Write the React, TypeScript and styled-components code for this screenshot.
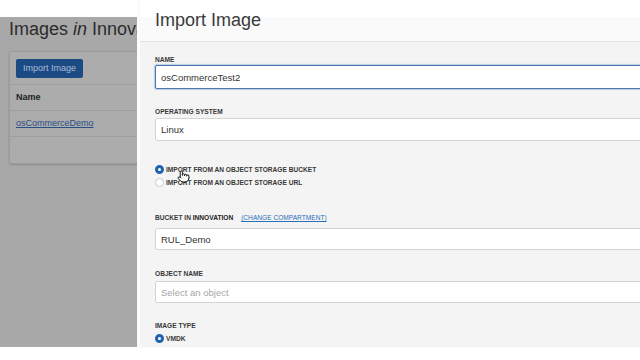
import React from 'react';
import styled, { createGlobalStyle } from 'styled-components';
import { Pointer } from 'lucide-react';

const GlobalStyle = createGlobalStyle`
  html, body {
    margin: 0;
    padding: 0;
    background: #fff;
    overflow: hidden;
    font-family: 'Liberation Sans', Arial, sans-serif;
  }
  * { box-sizing: border-box; }
`

const Frame = styled.div`
  display: flex;
  width: 640px;
  height: 347px;
`

const PageBehind = styled.section`
  flex: none;
  width: 137px;
  margin-top: 17px;
  padding-left: 9px;
  background-color: #a8a8a8;
  overflow: hidden;
`

const PageTitle = styled.h1`
  margin: 1px 0 0;
  font-size: 18px;
  line-height: 22px;
  font-weight: 400;
  color: #2c2c2c;
  white-space: nowrap;

  em { font-style: italic; }
`

const Card = styled.div`
  width: 200px;
  margin-top: 11px;
  background-color: #acacac;
  border: 1px solid #9b9b9b;
  border-radius: 2px;
  box-shadow: 0 1px 2px rgba(0, 0, 0, 0.18);
`

const Toolbar = styled.div`
  padding: 5px 6px 6px;
  border-bottom: 1px solid #9e9e9e;
`

const DimButton = styled.button`
  height: 19px;
  padding: 0 7px;
  border: 0;
  border-radius: 2px;
  background-color: #1c4a84;
  color: #a9bdd7;
  font-family: 'Liberation Sans', Arial, sans-serif;
  font-size: 9px;
`

const TableRow = styled.div<{ $bold?: boolean; $last?: boolean }>`
  display: flex;
  align-items: center;
  height: 26px;
  padding-left: 6px;
  border-bottom: ${p => (p.$last ? '0' : '1px solid #9e9e9e')};
  font-size: 9px;
  font-weight: ${p => (p.$bold ? 700 : 400)};
  color: #222;
`

const DimLink = styled.a`
  color: #2a4f86;
  text-decoration: underline;
`

const Panel = styled.section`
  position: relative;
  flex: 1;
  display: flex;
  flex-direction: column;
  background-color: #f4f4f4;
  border-left: 3px solid #fbfbfb;
  overflow: hidden;
`

const PanelHeader = styled.header`
  flex: none;
  height: 42px;
  padding: 9px 0 0 15px;
  background: linear-gradient(#fff 0 17px, #fafafa 17px);
  border-bottom: 1px solid #e3e3e3;
`

const PanelTitle = styled.h2`
  margin: 0;
  font-size: 18px;
  line-height: 22px;
  font-weight: 400;
  color: #3a3a3a;
`

const Form = styled.div`
  display: flex;
  flex-direction: column;
  width: 560px;
  padding-left: 15px;
`

const Field = styled.div<{ $top: number }>`
  display: flex;
  flex-direction: column;
  margin-top: ${p => p.$top}px;
`

const Label = styled.label<{ $gap?: number }>`
  display: block;
  height: 10px;
  line-height: 10px;
  margin-bottom: ${p => p.$gap ?? 0}px;
  font-size: 6.6px;
  font-weight: 700;
  text-transform: uppercase;
  color: #383838;
  white-space: nowrap;

  strong { font-weight: 700; color: #222; }
`

const LabelLink = styled.a`
  margin-left: 8px;
  font-weight: 400;
  color: #2a6db8;
  text-decoration: underline;
`

const TextInput = styled.input<{ $focused?: boolean; $height?: number }>`
  width: 100%;
  height: ${p => p.$height ?? 23}px;
  padding: 0 5px;
  background-color: #fff;
  border: 1px solid ${p => (p.$focused ? '#4d78b0' : '#d4d4d4')};
  box-shadow: ${p => (p.$focused ? '0 0 1px 1px rgba(110, 155, 210, 0.45)' : 'none')};
  border-radius: 2px;
  outline: none;
  font-family: 'Liberation Sans', Arial, sans-serif;
  font-size: 9.5px;
  color: #333;

  &::placeholder { color: #a6a6a6; }
`

const RadioGroup = styled.div<{ $top: number }>`
  display: flex;
  flex-direction: column;
  margin-top: ${p => p.$top}px;
`

const RadioRow = styled.div<{ $top?: number }>`
  display: flex;
  align-items: center;
  gap: 2px;
  height: 13px;
  margin-top: ${p => p.$top ?? 0}px;
  font-size: 6.6px;
  font-weight: 700;
  text-transform: uppercase;
  color: #383838;
  white-space: nowrap;
`

const RadioDot = styled.span<{ $checked?: boolean }>`
  flex: none;
  width: 9px;
  height: 9px;
  border-radius: 50%;
  background-color: #fff;
  border: ${p => (p.$checked ? '3px solid #1f64b0' : '1px solid #c9c9c9')};
`

const Hint = styled.p`
  margin: 0 0 0 11px;
  font-size: 6px;
  line-height: 8px;
  color: #a0a0a0;
  white-space: nowrap;
`

const Cursor = styled.span`
  position: absolute;
  left: 37px;
  top: 170px;
  display: flex;
`

const App: React.FC = () => {
  return (
    <>
      <GlobalStyle />
      <Frame>
        <PageBehind>
          <PageTitle>Images <em>in</em> Innova</PageTitle>
          <Card>
            <Toolbar>
              <DimButton>Import Image</DimButton>
            </Toolbar>
            <TableRow $bold>Name</TableRow>
            <TableRow><DimLink>osCommerceDemo</DimLink></TableRow>
            <TableRow $last />
          </Card>
        </PageBehind>

        <Panel>
          <PanelHeader>
            <PanelTitle>Import Image</PanelTitle>
          </PanelHeader>
          <Form>
            <Field $top={13}>
              <Label>Name</Label>
              <TextInput $focused $height={24} readOnly value='osCommerceTest2' />
            </Field>
            <Field $top={18}>
              <Label $gap={1}>Operating System</Label>
              <TextInput readOnly value='Linux' />
            </Field>
            <RadioGroup $top={22}>
              <RadioRow><RadioDot $checked />Import from an object storage bucket</RadioRow>
              <RadioRow><RadioDot />Import from an object storage URL</RadioRow>
            </RadioGroup>
            <Field $top={24}>
              <Label $gap={5}>
                Bucket in <strong>Innovation</strong>
                <LabelLink>(Change Compartment)</LabelLink>
              </Label>
              <TextInput $height={22} readOnly value='RUL_Demo' />
            </Field>
            <Field $top={19}>
              <Label $gap={2}>Object Name</Label>
              <TextInput $height={22} readOnly placeholder='Select an object' />
            </Field>
            <Field $top={18}>
              <Label>Image Type</Label>
              <RadioRow $top={1}><RadioDot $checked />VMDK</RadioRow>
              <Hint>Virtual machine disk file format. For disk images used in virtual machines.</Hint>
            </Field>
          </Form>
          <Cursor>
            <Pointer size={13} color='#111' fill='#fff' strokeWidth={1.8} />
          </Cursor>
        </Panel>
      </Frame>
    </>
  );
}

export default App;
